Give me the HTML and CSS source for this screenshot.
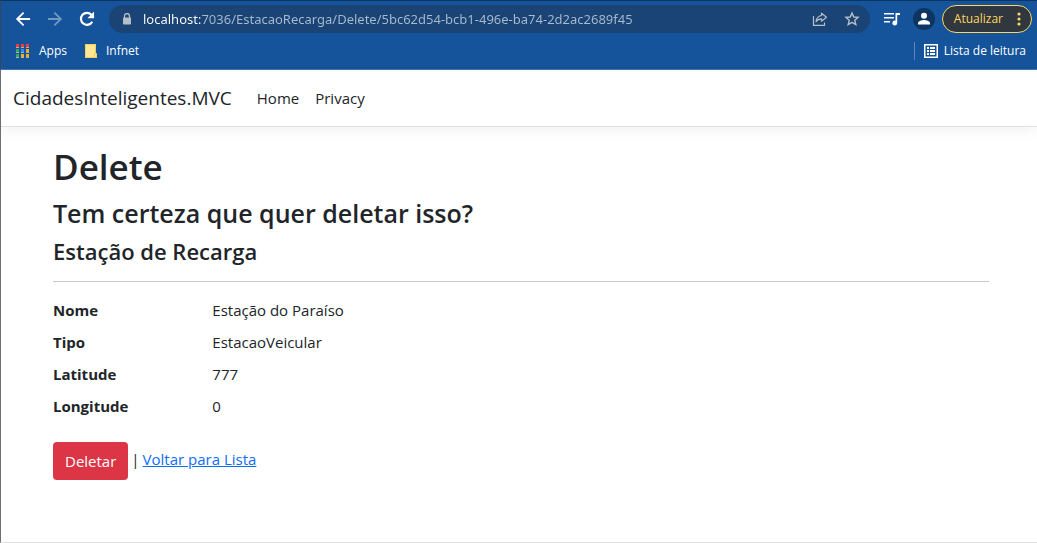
FILE: index.html
```html
<!DOCTYPE html>
<html lang="pt-BR">
<head>
<meta charset="utf-8">
<meta name="viewport" content="width=device-width, initial-scale=1">
<title>Delete - CidadesInteligentes.MVC</title>
<link rel="stylesheet" href="styles.css">
</head>
<body>
<div class="window">
  <div class="chrome">
    <div class="toolbar">
      <button class="tool" aria-label="Voltar"><svg width="20" height="20" viewBox="0 0 24 24" fill="currentColor"><path d="M20.500 10.800H7.800l5.700-5.700L12 3.500 3.500 12l8.500 8.500 1.500-1.600-5.700-5.700h12.700z"/></svg></button>
      <button class="tool tool-off" aria-label="Avançar"><svg width="20" height="20" viewBox="0 0 24 24" fill="currentColor"><path d="M3.500 10.800h12.700l-5.700-5.700L12 3.500l8.500 8.500-8.500 8.500-1.500-1.600 5.700-5.700H3.500z"/></svg></button>
      <button class="tool" aria-label="Recarregar"><svg width="20" height="20" viewBox="0 0 24 24" fill="none" stroke="currentColor" stroke-width="2.600"><path d="M18.300 15.200a7.200 7.200 0 1 1-1-8.300l2 2"/><path d="M20.500 3v8h-8z" fill="currentColor" stroke="none"/></svg></button>
      <div class="address">
        <svg class="lock" width="10" height="12" viewBox="0 0 10 12"><path d="M2.500 5V3a2.500 2.500 0 0 1 5 0v2" fill="none" stroke="currentColor" stroke-width="1.300"/><rect x="1" y="4.500" width="8" height="7" rx=".8" fill="currentColor"/></svg>
        <input class="url" type="text" aria-label="Endereço" value="localhost:7036/EstacaoRecarga/Delete/5bc62d54-bcb1-496e-ba74-2d2ac2689f45">
        <button class="mini" aria-label="Compartilhar"><svg width="16" height="16" viewBox="0 0 16 16" fill="none" stroke="currentColor" stroke-width="1.200"><path d="M1.500 5v9.300h11V11.500"/><path d="M9.500 2.200l5 4-5 4V7.900C7 7.900 5.300 8.700 4 10.700c.3-3 2-5.600 5.500-6.200z" stroke-linejoin="round"/></svg></button>
        <button class="mini" aria-label="Favoritar"><svg width="16" height="16" viewBox="0 0 16 16" fill="none" stroke="currentColor" stroke-width="1.400"><path d="M8 2l1.800 4 4.300.4-3.300 2.900 1 4.300L8 11.400l-3.800 2.200 1-4.300-3.300-2.900L6.200 6z"/></svg></button>
      </div>
      <button class="tool media" aria-label="Controle de mídia"><svg width="18" height="16" viewBox="0 0 18 16" fill="currentColor"><path d="M1 2h10v1.600H1zM1 6h10v1.600H1zM1 10h6v1.600H1zM12.500 2H17v2h-2.800v8a2.400 2.400 0 1 1-1.700-2.300z"/></svg></button>
      <button class="avatar" aria-label="Perfil"><svg width="22" height="22" viewBox="0 0 22 22"><circle cx="11" cy="11" r="11" fill="#0e3562"/><circle cx="11" cy="7.800" r="3" fill="#fff"/><path d="M5 16.500v-1.500c0-2 4-3 6-3s6 1 6 3v1.500z" fill="#fff"/></svg></button>
      <button class="update">Atualizar<svg width="4" height="14" viewBox="0 0 4 14" fill="currentColor"><circle cx="2" cy="2" r="1.600"/><circle cx="2" cy="7" r="1.600"/><circle cx="2" cy="12" r="1.600"/></svg></button>
    </div>
    <div class="bookmarks">
      <button class="bookmark"><svg width="14" height="14" viewBox="0 0 14 14"><path fill="#ff3b30" d="M0 0h3v3H0zM5 0h3v3H5zM10 0h3v3h-3z"/><path fill="#34a853" d="M0 5h3v3H0zM0 10h3v3H0z"/><path fill="#2f8cff" d="M5 5h3v3H5z"/><path fill="#fbae05" d="M10 5h3v3h-3zM5 10h3v3H5zM10 10h3v3h-3z"/><path stroke="#a9b3bd" stroke-dasharray="3 2" d="M0 3.500h13M0 8.500h13M0 13.500h13"/></svg>Apps</button>
      <button class="bookmark"><svg width="12" height="14" viewBox="0 0 12 14"><path fill="#ffe794" d="M0 0h11v9l1 1v4H0z"/><path fill="none" stroke="#f3cf5e" d="M.5 13.500V.5h10V9.500H9.500v4h2v-4M0 13.500h10"/></svg>Infnet</button>
      <button class="bookmark reading"><svg width="14" height="14" viewBox="0 0 14 14" fill="currentColor"><path fill-rule="evenodd" d="M0 0h14v14H0zM1.500 1.500v11h11v-11z"/><path d="M3 3h2v2H3zM6 3h5v2H6zM3 6h2v2H3zM6 6h5v2H6zM3 9h2v2H3zM6 9h5v2H6z"/></svg>Lista de leitura</button>
    </div>
  </div>
  <header class="navbar">
    <a class="brand" href="#">CidadesInteligentes.MVC</a>
    <nav class="links"><a href="#">Home</a><a href="#">Privacy</a></nav>
  </header>
  <main class="container">
    <h1>Delete</h1>
    <h2>Tem certeza que quer deletar isso?</h2>
    <h3>Estação de Recarga</h3>
    <hr>
    <dl class="details">
      <dt>Nome</dt><dd>Estação do Paraíso</dd>
      <dt>Tipo</dt><dd>EstacaoVeicular</dd>
      <dt>Latitude</dt><dd>777</dd>
      <dt>Longitude</dt><dd>0</dd>
    </dl>
    <form class="actions">
      <button class="danger" type="button">Deletar</button>
      <span>|</span>
      <a href="#">Voltar para Lista</a>
    </form>
  </main>
</div>
</body>
</html>
```
FILE: styles.css
```css
* { box-sizing: border-box; }
body {
  margin: 0;
  font-family: "Open Sans", "Noto Sans", sans-serif;
  font-size: 15px;
  line-height: 24px;
  color: #212529;
  background: #fff;
}
button { border: 0; padding: 0; background: none; color: inherit; font: inherit; }
svg { display: block; flex: none; }
.window {
  display: flex;
  flex-direction: column;
  min-height: 100vh;
  border-left: 1px solid #707070;
  border-bottom: 1px solid #dedede;
}
.chrome {
  margin-left: -1px;
  background: #15539a;
  color: #fff;
  border-top: 1px solid #0e3562;
  border-bottom: 1px solid #4475ae;
  border-left: 1px solid #33475f;
  font-size: 12px;
  line-height: 16px;
}
.toolbar { display: flex; align-items: center; padding: 4px 5px 4px 12px; }
.tool { margin-right: 12px; }
.tool-off { color: #7398c4; }
.address {
  flex: 1;
  display: flex;
  align-items: center;
  height: 28px;
  padding: 0 10px 0 13px;
  border-radius: 14px;
  background: #1a4475;
  color: #b5bfca;
}
.lock { margin-right: 11px; }
.url {
  flex: 1;
  min-width: 0;
  border: 0;
  padding: 0;
  outline: 0;
  font: 13px/20px "Noto Sans", "Open Sans", sans-serif;
  color: transparent;
  background: linear-gradient(90deg, #fff 57px, #a8bbd0 57px);
  -webkit-background-clip: text;
  background-clip: text;
}
.mini { margin-left: 16px; }
.media { margin: 0 12px 0 13px; }
.avatar { margin-right: 7px; }
.update {
  display: flex;
  align-items: center;
  gap: 14px;
  height: 28px;
  padding: 0 10px 0 11px;
  border: 1px solid #fdd663;
  border-radius: 14px;
  background: #30373e;
  color: #fdd663;
}
.bookmarks { display: flex; align-items: center; gap: 18px; padding: 5px 11px 9px 15px; }
.bookmark { display: flex; align-items: center; gap: 9px; height: 18px; }
.reading { gap: 6px; margin-left: auto; padding-left: 9px; border-left: 1px solid #5b87b9; }
.navbar {
  display: flex;
  align-items: center;
  height: 57px;
  padding: 0 12px;
  border-bottom: 1px solid #dee2e6;
  box-shadow: 0 4px 12px rgba(0, 0, 0, .05);
}
.navbar a { color: #212529; text-decoration: none; }
.navbar .brand { margin-right: 25px; font-size: 19px; }
.links { display: flex; gap: 16px; }
.container { padding: 16px 48px 24px 52px; }
h1, h2, h3 { margin: 0; font-weight: 600; }
h1 { margin-bottom: 6px; font-size: 35px; line-height: 48px; }
h2 { margin-bottom: 8px; font-size: 25px; line-height: 32px; }
h3 { margin-bottom: 16px; font-size: 22px; line-height: 28px; }
hr { margin: 0 0 16px; border: 0; border-top: 1px solid #c8c9ca; }
.details {
  display: grid;
  grid-template-columns: 1fr 5fr;
  gap: 8px 4px;
  margin: 0 0 24px;
}
dt { font-weight: 700; }
dd { margin: 0; }
.actions { display: flex; align-items: flex-start; gap: 3px; line-height: 35px; }
.actions a { color: #0d6efd; }
.danger {
  height: 38px;
  padding: 0 12px;
  border-radius: 4px;
  background: #dc3545;
  color: #fff;
}
```
